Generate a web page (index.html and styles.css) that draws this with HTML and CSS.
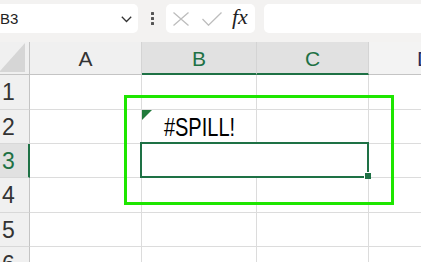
FILE: index.html
```html
<!DOCTYPE html>
<html>
<head>
<meta charset="utf-8">
<link rel="stylesheet" href="styles.css">
</head>
<body>
<div class="toolbar">
  <div class="namebox">
    <span class="nb-text">B3</span>
    <svg class="chev" width="11" height="7" viewBox="0 0 11 7"><path d="M0.8 0.8 L5.5 5.5 L10.2 0.8" fill="none" stroke="#333" stroke-width="1.3"/></svg>
  </div>
  <div class="grip"><i></i><i></i><i></i></div>
  <div class="fbuttons">
    <svg class="ic-x" width="16" height="14" viewBox="0 0 16 14"><path d="M0.5 0.5 L15.5 13.5 M15.5 0.5 L0.5 13.5" stroke="#bdbdbd" stroke-width="1.3" fill="none"/></svg>
    <svg class="ic-ok" width="20" height="14" viewBox="0 0 20 14"><path d="M0.5 7 L6.5 13.2 L19.5 0.5" stroke="#bdbdbd" stroke-width="1.3" fill="none"/></svg>
    <span class="fx">fx</span>
  </div>
  <div class="formula"></div>
</div>
<div class="sheet">
  <div class="grid">
    <div class="corner"><span class="corner-tri"></span></div>
    <div class="ch">A</div>
    <div class="ch sel">B</div>
    <div class="ch sel">C</div>
    <div class="ch chd">D</div>

    <div class="rh">1</div>
    <div class="c"></div><div class="c"></div><div class="c"></div><div class="c"></div>

    <div class="rh">2</div>
    <div class="c"></div>
    <div class="c err"><span class="err-tri"></span><span class="spill">#SPILL!</span></div>
    <div class="c"></div><div class="c"></div>

    <div class="rh rsel">3</div>
    <div class="c"></div>
    <div class="c merged"><span class="handle"></span></div>
    <div class="c"></div>

    <div class="rh">4</div>
    <div class="c"></div><div class="c"></div><div class="c"></div><div class="c"></div>

    <div class="rh">5</div>
    <div class="c"></div><div class="c"></div><div class="c"></div><div class="c"></div>

    <div class="rh">6</div>
    <div class="c"></div><div class="c"></div><div class="c"></div><div class="c"></div>
  </div>
  <div class="spill-range"></div>
</div>
</body>
</html>
```

FILE: styles.css
```css
* { box-sizing: border-box; }
html, body { margin: 0; padding: 0; }
body {
  width: 421px;
  height: 262px;
  overflow: hidden;
  background: #fff;
  font-family: "Liberation Sans", Arial, sans-serif;
}

.toolbar {
  height: 42px;
  background: #f3f2f1;
  display: flex;
  align-items: flex-start;
  padding-top: 4px;
}
.namebox {
  margin-left: -6px;
  width: 144px;
  height: 29px;
  background: #fff;
  border-radius: 5px;
  display: flex;
  align-items: center;
  justify-content: space-between;
  padding: 0 6px 0 6px;
}
.nb-text {
  font-size: 15px;
  color: #222;
}
.chev { display: block; margin-top: 1px; }
.grip {
  margin-left: 13px;
  width: 3px;
  height: 29px;
  display: flex;
  flex-direction: column;
  justify-content: center;
  gap: 2px;
}
.grip i {
  display: block;
  width: 3px;
  height: 3px;
  background: #555;
  border-radius: 0.5px;
}
.fbuttons {
  margin-left: 12px;
  width: 89px;
  height: 29px;
  background: #fff;
  border-radius: 5px;
  display: flex;
  align-items: center;
  padding-left: 7px;
}
.ic-x { display: block; }
.ic-ok { display: block; margin-left: 13px; }
.fx {
  margin-left: 10px;
  font-family: "Liberation Serif", "Times New Roman", serif;
  font-style: italic;
  font-size: 22px;
  color: #222;
  line-height: 1;
  margin-top: -3px;
}
.formula {
  margin-left: 9px;
  flex: 1;
  height: 29px;
  background: #fff;
  border-radius: 5px;
  margin-right: -10px;
}

.sheet { position: relative; }
.grid {
  display: grid;
  width: 481px;
  grid-template-columns: 30px 112px 115px 112px 112px;
  grid-template-rows: 33px 35px 34px 34px 35px 34px 34px;
}
.corner {
  background: #f0f0f0;
  border-right: 1px solid #c4c4c4;
  border-bottom: 1px solid #c4c4c4;
  position: relative;
  overflow: hidden;
}
.corner-tri {
  position: absolute;
  right: 4px;
  bottom: 2px;
  width: 26px;
  height: 29px;
  background: #d6d6d6;
  clip-path: polygon(100% 0, 100% 100%, 0 100%);
}
.ch {
  background: #f0f0f0;
  border-right: 1px solid #d4d4d4;
  border-bottom: 1px solid #c4c4c4;
  display: flex;
  align-items: center;
  justify-content: center;
  font-size: 21px;
  color: #333;
  padding-top: 2px;
}
.ch.chd { background: #f3f3f3; color: #2b2b5a; }
.ch.sel {
  background: #e1e1e1;
  color: #1e7145;
  border-bottom: 2px solid #1e7145;
}
.rh {
  background: #f0f0f0;
  border-right: 1px solid #c4c4c4;
  border-bottom: 1px solid #d8d8d8;
  display: flex;
  align-items: center;
  padding-left: 2px;
  font-size: 23px;
  color: #333;
  padding-top: 1px;
}
.rh.rsel {
  background: #e1e1e1;
  color: #1e7145;
  border-right: 2px solid #1e7145;
}
.c {
  border-right: 1px solid #dcdcdc;
  border-bottom: 1px solid #dcdcdc;
  position: relative;
}
.err {
  display: flex;
  align-items: flex-end;
  justify-content: center;
  padding-bottom: 3px;
}
.err-tri {
  position: absolute;
  left: 0;
  top: 0;
  width: 10px;
  height: 10px;
  background: #217a3b;
  clip-path: polygon(0 0, 100% 0, 0 100%);
}
.spill {
  display: inline-block;
  font-size: 25px;
  line-height: 1;
  color: #000;
  transform: scaleX(0.8);
  transform-origin: center bottom;
}
.merged {
  grid-column: span 2;
}
.merged::after {
  content: "";
  position: absolute;
  top: -2px;
  left: -2px;
  right: -1px;
  bottom: -1px;
  border: 2px solid #1e7145;
}
.handle {
  position: absolute;
  right: -3px;
  bottom: -2px;
  width: 7px;
  height: 7px;
  background: #1e7145;
  border-top: 1px solid #fff;
  border-left: 1px solid #fff;
  z-index: 2;
}
.spill-range {
  position: absolute;
  left: 124px;
  top: 53px;
  width: 270px;
  height: 110px;
  border: 3px solid #1ee600;
  pointer-events: none;
}
```
